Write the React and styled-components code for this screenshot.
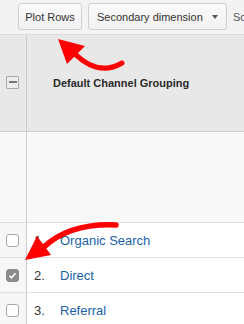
import React from "react";
import styled, { createGlobalStyle } from "styled-components";

const Global = createGlobalStyle`
  html, body { margin: 0; padding: 0; background: #fff; overflow: hidden; }
  body { font-family: "Liberation Sans", Arial, sans-serif; }
`;

const Page = styled.div`
  position: relative;
  width: 244px;
  height: 324px;
  overflow: hidden;
`;

const Toolbar = styled.div`
  height: 34px;
  box-sizing: content-box;
  background: #f3f3f3;
  border-bottom: 1px solid #dcdcdc;
  display: flex;
  align-items: flex-start;
  padding: 3px 0 0 18px;
  box-sizing: border-box;
  height: 35px;
  gap: 6px;
  white-space: nowrap;
`;

const Button = styled.div`
  height: 27px;
  box-sizing: border-box;
  border: 1px solid #cfcfcf;
  border-radius: 3px;
  background: linear-gradient(#fafafa, #f1f1f1);
  color: #333;
  font-size: 11px;
  display: flex;
  align-items: center;
  justify-content: ${(p) => (p.$wide ? "space-between" : "center")};
  width: ${(p) => p.$w}px;
  padding: ${(p) => (p.$wide ? "0 8px 0 8px" : "0")};
  flex-shrink: 0;
`;

const Caret = styled.span`
  width: 0;
  height: 0;
  border-left: 3.5px solid transparent;
  border-right: 3.5px solid transparent;
  border-top: 4px solid #555;
`;

const ToolLabel = styled.span`
  font-size: 11px;
  color: #555;
  align-self: center;
  margin-top: -3px;
`;

const Row = styled.div`
  display: grid;
  grid-template-columns: 27px 1fr;
  height: ${(p) => p.$h}px;
  box-sizing: border-box;
  border-bottom: 1px solid ${(p) => p.$line || "#dedede"};
  background: ${(p) => p.$bg || "#fff"};
`;

const SideCell = styled.div`
  border-right: 1px solid #cccccc;
  background: ${(p) => p.$bg || "transparent"};
  display: flex;
  align-items: center;
  padding-left: 6px;
`;

const MainCell = styled.div`
  display: flex;
  align-items: center;
  padding-left: ${(p) => p.$pl}px;
`;

const HeaderText = styled.span`
  font-weight: bold;
  font-size: 11px;
  color: #2a2a2a;
`;

const Box = styled.span`
  width: 13px;
  height: 13px;
  box-sizing: border-box;
  border: 1px solid ${(p) => (p.$checked ? "#8a8a8a" : "#a9a9a9")};
  border-radius: ${(p) => (p.$minus ? "1px" : "3px")};
  background: ${(p) => (p.$checked ? "#8c8c8c" : p.$minus ? "#ececec" : "#fff")};
  display: flex;
  align-items: center;
  justify-content: center;
  margin-top: ${(p) => (p.$minus ? "-2px" : "0")};
`;

const Dash = styled.span`
  width: 8px;
  height: 2px;
  background: #777;
`;

const Num = styled.span`
  width: 26px;
  font-size: 13px;
  color: #333;
`;

const Link = styled.span`
  font-size: 13px;
  color: #1a62a8;
`;

const Overlay = styled.svg`
  position: absolute;
  left: 0;
  top: 0;
  pointer-events: none;
`;

const rows = [
  { n: "1.", label: "Organic Search", checked: false },
  { n: "2.", label: "Direct", checked: true },
  { n: "3.", label: "Referral", checked: false },
];

export default function App() {
  return (
    <Page>
      <Global />
      <Toolbar>
        <Button $w={64}>Plot Rows</Button>
        <Button $w={139} $wide>
          <span>Secondary dimension</span>
          <Caret />
        </Button>
        <ToolLabel>Sort</ToolLabel>
      </Toolbar>
      <Row $h={97} $bg="#e8e8e8" $line="#cfcfcf">
        <SideCell>
          <Box $minus>
            <Dash />
          </Box>
        </SideCell>
        <MainCell $pl={26}>
          <HeaderText>Default Channel Grouping</HeaderText>
        </MainCell>
      </Row>
      <Row $h={91} $bg="#f8f8f8">
        <SideCell />
        <MainCell $pl={0} />
      </Row>
      {rows.map((r) => (
        <Row key={r.n} $h={35}>
          <SideCell $bg="#f7f7f7">
            <Box $checked={r.checked}>
              {r.checked && (
                <svg width="9" height="9" viewBox="0 0 9 9">
                  <path d="M1.5 4.8 L3.6 6.8 L7.5 2.2" fill="none" stroke="#fff" strokeWidth="1.6" />
                </svg>
              )}
            </Box>
          </SideCell>
          <MainCell $pl={7}>
            <Num>{r.n}</Num>
            <Link>{r.label}</Link>
          </MainCell>
        </Row>
      ))}
      <Overlay width="244" height="324" viewBox="0 0 244 324">
        <path d="M74 53 Q98 77 122 63" fill="none" stroke="#f00" strokeWidth="5" strokeLinecap="round" />
        <polygon points="58,39 85,46 67,64" fill="#f00" />
        <path d="M44 247 Q70 223 116 225" fill="none" stroke="#f00" strokeWidth="5.5" strokeLinecap="round" />
        <polygon points="25,260 37,236 51,255" fill="#f00" />
      </Overlay>
    </Page>
  );
}
